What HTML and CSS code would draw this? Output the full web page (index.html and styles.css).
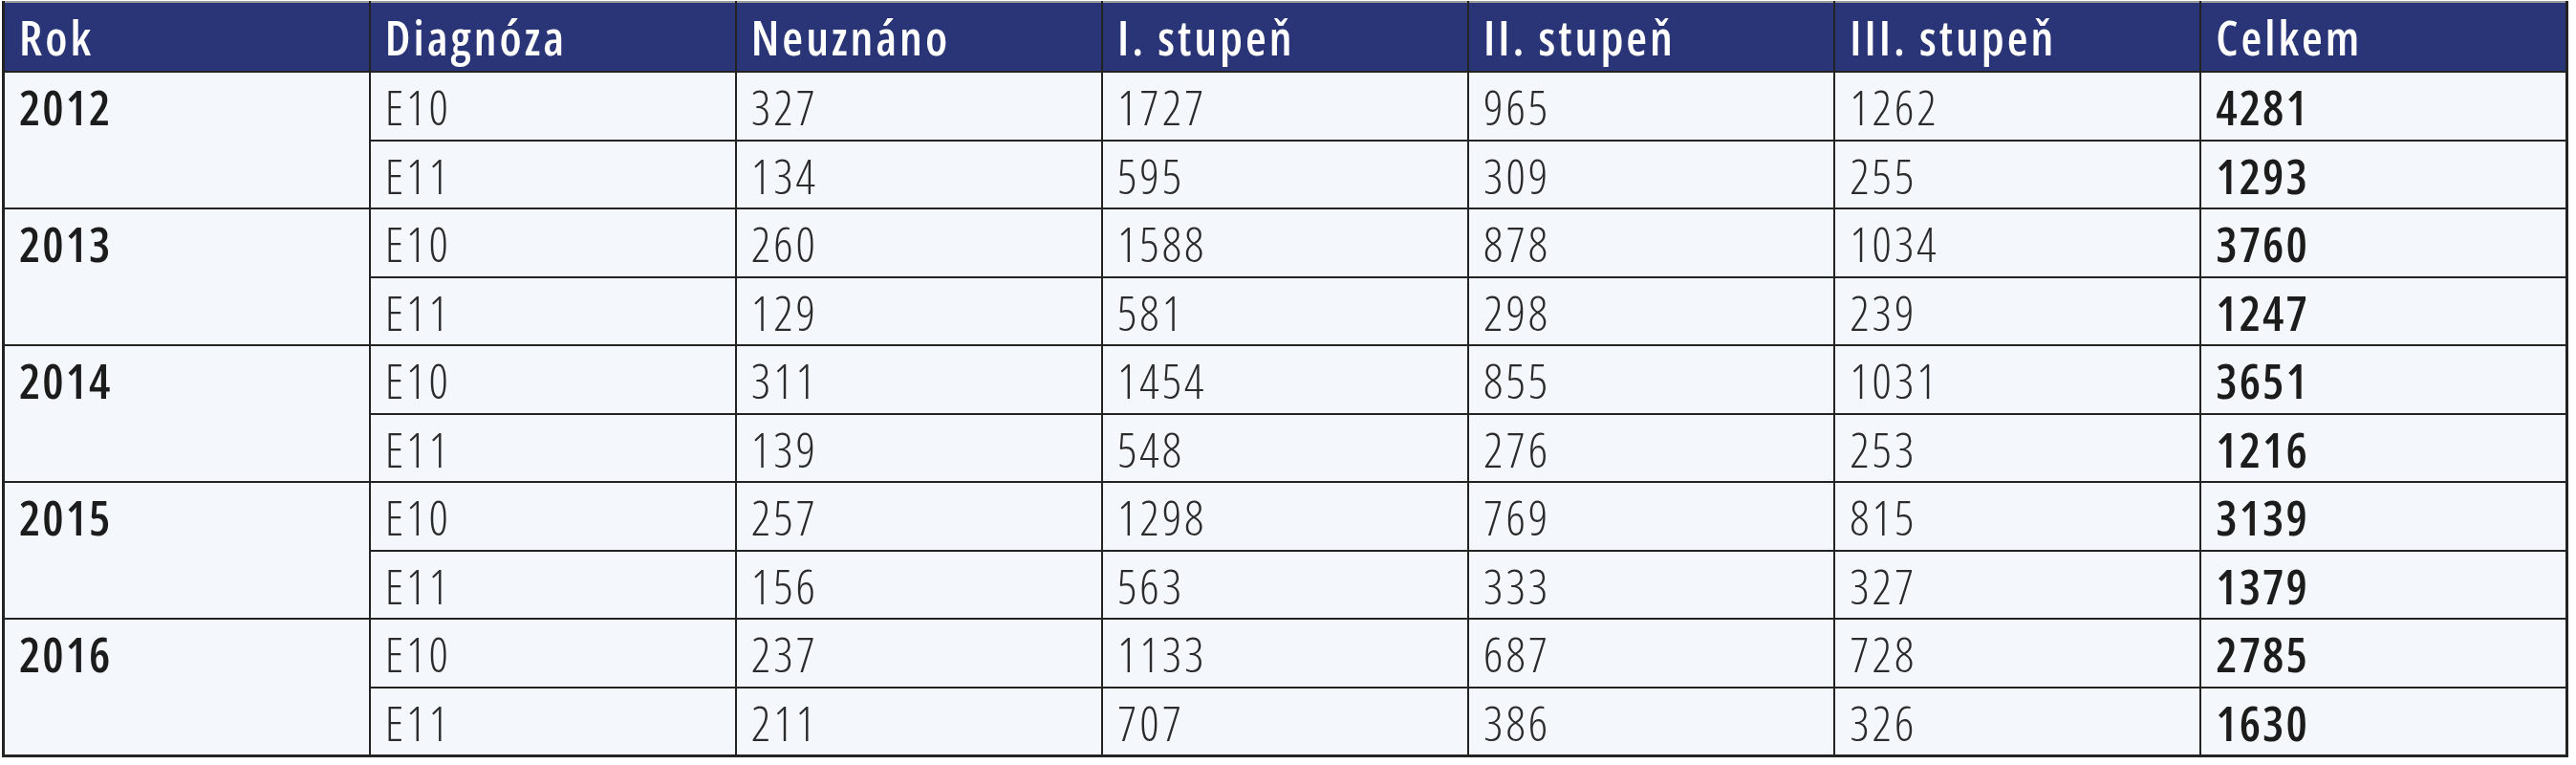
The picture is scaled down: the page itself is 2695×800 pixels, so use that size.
FILE: index.html
```html
<!DOCTYPE html>
<html lang="cs">
<head>
<meta charset="utf-8">
<link rel="stylesheet" href="styles.css">
</head>
<body>
<table class="data">
  <colgroup>
    <col><col><col><col><col><col><col>
  </colgroup>
  <thead>
    <tr class="head">
      <th>Rok</th><th>Diagnóza</th><th>Neuznáno</th><th>I. stupeň</th><th>II. stupeň</th><th>III. stupeň</th><th>Celkem</th>
    </tr>
  </thead>
  <tbody>
    <tr class="r1"><td class="year" rowspan="2">2012</td><td>E10</td><td>327</td><td>1727</td><td>965</td><td>1262</td><td class="total">4281</td></tr>
    <tr class="r2"><td>E11</td><td>134</td><td>595</td><td>309</td><td>255</td><td class="total">1293</td></tr>
    <tr class="r1"><td class="year" rowspan="2">2013</td><td>E10</td><td>260</td><td>1588</td><td>878</td><td>1034</td><td class="total">3760</td></tr>
    <tr class="r2"><td>E11</td><td>129</td><td>581</td><td>298</td><td>239</td><td class="total">1247</td></tr>
    <tr class="r1"><td class="year" rowspan="2">2014</td><td>E10</td><td>311</td><td>1454</td><td>855</td><td>1031</td><td class="total">3651</td></tr>
    <tr class="r2"><td>E11</td><td>139</td><td>548</td><td>276</td><td>253</td><td class="total">1216</td></tr>
    <tr class="r1"><td class="year" rowspan="2">2015</td><td>E10</td><td>257</td><td>1298</td><td>769</td><td>815</td><td class="total">3139</td></tr>
    <tr class="r2"><td>E11</td><td>156</td><td>563</td><td>333</td><td>327</td><td class="total">1379</td></tr>
    <tr class="r1"><td class="year" rowspan="2">2016</td><td>E10</td><td>237</td><td>1133</td><td>687</td><td>728</td><td class="total">2785</td></tr>
    <tr class="r2"><td>E11</td><td>211</td><td>707</td><td>386</td><td>326</td><td class="total">1630</td></tr>
  </tbody>
</table>
</body>
</html>
```
FILE: styles.css
```css
html, body {
  margin: 0;
  padding: 0;
  background: #ffffff;
}

body {
  padding: 1px 0 0 2px;
}

.data {
  width: 2685px;
  border-collapse: collapse;
  table-layout: fixed;
  font-family: "Open Sans", "Liberation Sans", sans-serif;
  font-stretch: 87.5%;
  font-size: 50px;
  line-height: 50px;
  letter-spacing: 3px;
  border: 3px solid #232323;
  border-top: 2px solid #9c9c9c;
}

.data col {
  width: 14.2857%;
}

.data th,
.data td {
  text-align: left;
  vertical-align: top;
  padding: 11px 16px 0 15px;
  border: 2px solid #232323;
  white-space: nowrap;
}

.head {
  height: 73px;
}

.head th {
  background: #2a3577;
  color: #ffffff;
  font-weight: 600;
  border-top: 2px solid #9c9c9c;
  padding-top: 11px;
}

.r1,
.r2 {
  height: 71.5px;
}

.data td {
  background: #f4f8fc;
  color: #2b2b2b;
  font-weight: 300;
}

.data td.year,
.data td.total {
  font-weight: 600;
  color: #1c1c1c;
  letter-spacing: 2px;
}

.data td.year {
  border-left: 3px solid #232323;
}
```
